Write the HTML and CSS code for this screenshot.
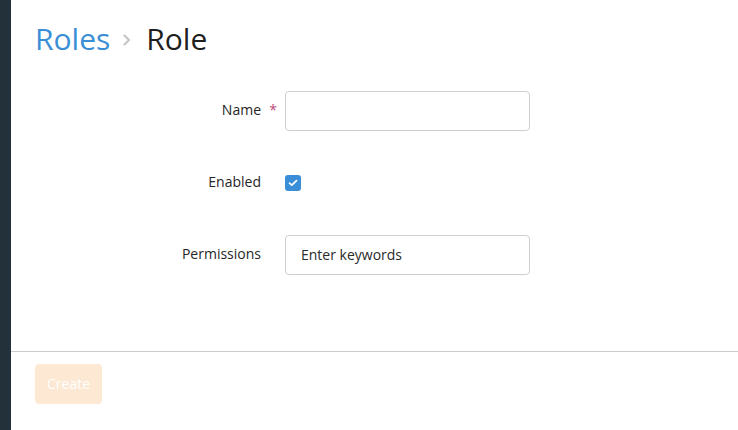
FILE: index.html
```html
<!DOCTYPE html>
<html>
<head>
<meta charset="utf-8">
<link rel="stylesheet" href="styles.css">
</head>
<body>
<div class="app">
  <aside class="sidebar"></aside>
  <main class="main">
    <header class="header">
      <h1 class="title">
        <a class="crumb">Roles</a>
        <svg class="chev" width="8" height="12" viewBox="0 0 8 12"><path d="M1.5 1.5 L6 6 L1.5 10.5" fill="none" stroke="#c9c9c9" stroke-width="2.4" stroke-linecap="round" stroke-linejoin="round"/></svg>
        <span class="current">Role</span>
      </h1>
    </header>
    <form class="form">
      <label class="label">Name</label>
      <span class="req">*</span>
      <input class="input" type="text">

      <label class="label">Enabled</label>
      <span class="req"></span>
      <div class="checkcell">
        <span class="checkbox">
          <svg width="10" height="8" viewBox="0 0 10 8"><path d="M1.5 4.2 L3.8 6.2 L8.5 1.6" fill="none" stroke="#fff" stroke-width="1.7" stroke-linecap="round" stroke-linejoin="round"/></svg>
        </span>
      </div>

      <label class="label">Permissions</label>
      <span class="req"></span>
      <input class="input" type="text" placeholder="Enter keywords">
    </form>
    <footer class="footer">
      <button class="btn" type="button">Create</button>
    </footer>
  </main>
</div>
</body>
</html>
```
FILE: styles.css
```css
* { box-sizing: border-box; }
html, body { margin: 0; padding: 0; background: #fff; }
body {
  font-family: "Open Sans", "Liberation Sans", sans-serif;
  color: #222;
  width: 738px;
  height: 430px;
  overflow: hidden;
}
.app { display: flex; height: 430px; }
.sidebar { width: 11px; background: #23313a; flex: none; }
.main { flex: 1; display: flex; flex-direction: column; }
.header { padding: 18px 24px 0; }
.title {
  margin: 0;
  font-size: 30px;
  font-weight: 400;
  line-height: 41px;
  display: flex;
  align-items: center;
}
.crumb { color: #3a8ed6; }
.chev { margin: 2px 15px 0 13px; }
.current { color: #1e1e1e; }
.form {
  display: grid;
  grid-template-columns: 226px 24px 245px;
  grid-auto-rows: 40px;
  row-gap: 32px;
  align-items: center;
  align-content: start;
  padding: 32px 24px 0;
  height: 293px;
  border-bottom: 1px solid #cbcbcb;
  margin: 0;
}
.label {
  text-align: right;
  font-size: 14px;
  color: #262626;
  margin-top: -3px;
}
.req {
  color: #c04b7b;
  font-size: 14px;
  text-align: center;
  margin-top: -3px;
}
.input {
  width: 245px;
  height: 40px;
  border: 1px solid #cfcfcf;
  border-radius: 4px;
  padding: 0 15px 2px;
  font-family: "Open Sans", "Liberation Sans", sans-serif;
  font-size: 14px;
  color: #222;
  outline: none;
}
.input::placeholder { color: #2a2a2a; opacity: 1; }
.checkcell { display: flex; align-items: center; }
.checkbox {
  width: 16px;
  height: 16px;
  border-radius: 3px;
  background: #3a8ed8;
  display: flex;
  align-items: center;
  justify-content: center;
}
.footer { padding: 12px 24px; }
.btn {
  height: 40px;
  padding: 0 11px 2px;
  border: 1px solid #fce8d3;
  border-radius: 4px;
  background: #fce8d3;
  color: #fff;
  font-family: "Open Sans", "Liberation Sans", sans-serif;
  font-size: 14px;
}
```
